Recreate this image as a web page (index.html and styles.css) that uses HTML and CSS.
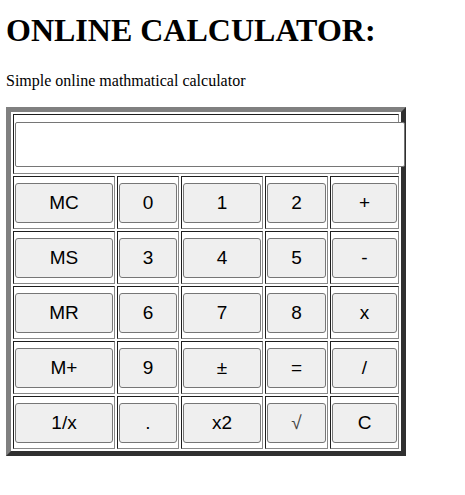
FILE: index.html
```html
<!DOCTYPE html>
<html>
<head>
<meta charset="utf-8">
<title>Online Calculator</title>
<link rel="stylesheet" href="styles.css">
</head>
<body>
<h1 class="title">ONLINE CALCULATOR:</h1>
<p class="intro">Simple online mathmatical calculator</p>
<div class="calc">
  <div class="cell display-cell"><input class="display" type="text"></div>
  <div class="cell"><button class="key">MC</button></div>
  <div class="cell"><button class="key">0</button></div>
  <div class="cell"><button class="key">1</button></div>
  <div class="cell"><button class="key">2</button></div>
  <div class="cell"><button class="key">+</button></div>
  <div class="cell"><button class="key">MS</button></div>
  <div class="cell"><button class="key">3</button></div>
  <div class="cell"><button class="key">4</button></div>
  <div class="cell"><button class="key">5</button></div>
  <div class="cell"><button class="key">-</button></div>
  <div class="cell"><button class="key">MR</button></div>
  <div class="cell"><button class="key">6</button></div>
  <div class="cell"><button class="key">7</button></div>
  <div class="cell"><button class="key">8</button></div>
  <div class="cell"><button class="key">x</button></div>
  <div class="cell"><button class="key">M+</button></div>
  <div class="cell"><button class="key">9</button></div>
  <div class="cell"><button class="key">±</button></div>
  <div class="cell"><button class="key">=</button></div>
  <div class="cell"><button class="key">/</button></div>
  <div class="cell"><button class="key">1/x</button></div>
  <div class="cell"><button class="key">.</button></div>
  <div class="cell"><button class="key">x2</button></div>
  <div class="cell"><button class="key sqrt">√</button></div>
  <div class="cell"><button class="key">C</button></div>
</div>
</body>
</html>
```
FILE: styles.css
```css
html, body {
  background: #ffffff;
}
body {
  margin: 0;
  padding: 0 6px;
  font-family: "Liberation Serif", "Times New Roman", serif;
  color: #000;
}
.title {
  margin: 12px 0 23px;
  font-size: 32px;
  font-weight: bold;
}
.intro {
  margin: 0 0 17px;
  font-size: 16px;
}
.calc {
  display: inline-grid;
  grid-template-columns: 102px 62px 82px 63px 69px;
  gap: 2px;
  padding: 2px;
  border: 5px solid;
  border-color: #808080 #303030 #303030 #808080;
}
.cell {
  box-sizing: border-box;
  height: 53px;
  padding: 6px 1px 5px;
  border: 1px solid;
  border-color: #1e1e1e #888888 #888888 #1e1e1e;
}
.display-cell {
  grid-column: 1 / -1;
  height: 60px;
  padding: 7px 1px 6px;
}
.display {
  display: block;
  box-sizing: border-box;
  width: 390px;
  height: 45px;
  margin: 0;
  padding: 1px 2px;
  border: 1px solid #767676;
  border-radius: 2px;
  background: #fff;
  font-family: "Liberation Sans", Arial, sans-serif;
  font-size: 19px;
}
.key {
  display: block;
  box-sizing: border-box;
  width: 100%;
  height: 40px;
  margin: 0;
  padding: 0;
  border: 1px solid #767676;
  border-radius: 3px;
  background: #efefef;
  color: #000;
  font-family: "Liberation Sans", Arial, sans-serif;
  font-size: 19px;
}
.sqrt {
  color: #444;
}
```
